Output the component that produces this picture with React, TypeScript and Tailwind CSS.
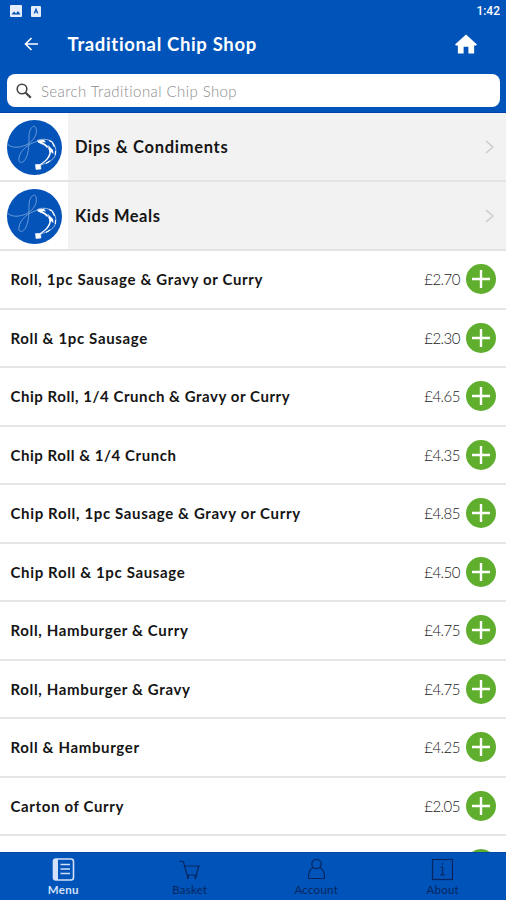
import React from 'react';

const items: [string, string, boolean?][] = [
  ['Roll, 1pc Sausage & Gravy or Curry', '£2.70'],
  ['Roll & 1pc Sausage', '£2.30'],
  ['Chip Roll, 1/4 Crunch & Gravy or Curry', '£4.65', true],
  ['Chip Roll & 1/4 Crunch', '£4.35', true],
  ['Chip Roll, 1pc Sausage & Gravy or Curry', '£4.85'],
  ['Chip Roll & 1pc Sausage', '£4.50'],
  ['Roll, Hamburger & Curry', '£4.75'],
  ['Roll, Hamburger & Gravy', '£4.75'],
  ['Roll & Hamburger', '£4.25'],
  ['Carton of Curry', '£2.05'],
  ['', ''],
];

function Logo() {
  return (
    <svg className="size-[55px]" viewBox="0 0 55 55" fill="none">
      <circle cx="27.5" cy="27.5" r="27.5" fill="#0453b8" />
      <path
        d="M1 24.5 C6 29 14 27 19 25 C26 22 31 14 29 8 C27 3 22 9 22 16 C22 23 22 32 19 38 C16 44 11 44 12 38 C13 31 20 24 31 21"
        stroke="#7fa9e0"
        strokeWidth="0.8"
      />
      <path
        d="M30.5 20.5 C34 18.5 41 19 45 21.5 C49 26 50 32 47.5 37 C44 42 38 43 33.5 45.5 L34 49 L29 49.5 L28.5 44.5 L33 44.5 C38 42 42 38 43 33 C43 28 38 24 33 23.5 Z"
        stroke="#fff"
        strokeWidth="0.6"
        fill="#0453b8"
      />
      <path d="M30.5 20.5 L37 19.8 L39 22.5 L35 21.8 L41 26 L40 28 C37 24.5 34 23.5 31 22.5 Z" fill="#fff" />
      <path d="M41 25 L46 30 L46.5 34 L44 32 C43.5 37 40 41 35 44 L33.5 45.5 L34 49 L29 49.5 L28.5 44.5 L32.5 44.5 C37 42 41 38 42.5 33 Z" fill="#fff" />
      <path d="M42 20.5 L45 22 L47.5 27 M48.5 31 L48.3 35 M43 41 L39 43.5" stroke="#fff" strokeWidth="1.1" />
    </svg>
  );
}

function Category({ name, wide }: { name: string; wide?: boolean }) {
  return (
    <div className="flex h-[69px] shrink-0 border-b-2 border-[#e4e4e4] bg-[#f2f2f2]">
      <div className="flex w-[68px] items-center bg-white pt-px pl-[7px]">
        <Logo />
      </div>
      <div className="flex flex-1 items-center justify-between pr-[12px] pl-[7px]">
        <span
          className={
            wide
              ? 'text-[16.5px] leading-5 font-bold tracking-[0.7px] text-[#151515]'
              : 'text-[16.5px] leading-5 font-bold tracking-[0.55px] text-[#151515]'
          }
        >
          {name}
        </span>
        <svg className="h-[14px] w-[9px]" viewBox="0 0 9 14" fill="none" stroke="#cacaca" strokeWidth="1.4">
          <path d="M1 1 L8 7 L1 13" />
        </svg>
      </div>
    </div>
  );
}

function Item({ name, price, tight }: { name: string; price: string; tight?: boolean }) {
  return (
    <div className="flex h-[58.5px] shrink-0 items-center border-b-2 border-[#e6e6e6] pr-[10px] pl-[10.5px]">
      <span
        className={
          tight
            ? 'flex-1 text-[15px] leading-5 font-bold tracking-[0.55px] text-[#151515]'
            : 'flex-1 text-[15px] leading-5 font-bold tracking-[0.65px] text-[#151515]'
        }
      >
        {name}
      </span>
      <span className="mr-[6px] text-[15px] leading-5 font-light tracking-[-0.5px] text-[#222]">{price}</span>
      <svg className="size-[30px]" viewBox="0 0 30 30">
        <circle cx="15" cy="15" r="15" fill="#5fae2d" />
        <path d="M15 6 V24 M6 15 H24" stroke="#fff" strokeWidth="2.4" />
      </svg>
    </div>
  );
}

function Tab({ label, active, children }: { label: string; active?: boolean; children: React.ReactNode }) {
  return (
    <div className={active ? 'flex flex-1 flex-col items-center pt-[5px] text-[#d3e0fa]' : 'flex flex-1 flex-col items-center pt-[5px] text-[#07265f]'}>
      <svg className="size-[23px]" viewBox="0 0 23 23" fill="none" stroke="currentColor" strokeWidth="1.2">
        {children}
      </svg>
      <span
        className={
          active
            ? 'mt-px text-[11.5px] leading-[15px] font-bold tracking-[0.25px]'
            : 'mt-px text-[11.5px] leading-[15px] tracking-[0.25px]'
        }
      >
        {label}
      </span>
    </div>
  );
}

export default function App() {
  return (
    <div className="flex h-[900px] w-[506px] flex-col overflow-hidden bg-white font-['Lato',sans-serif]">
      <header className="h-[113px] shrink-0 border-b border-[#003fae] bg-[#0053b8]">
        <div className="flex h-[22px] items-center pr-[6px] pl-[10px]">
          <svg className="mr-[9px] size-[12px]" viewBox="0 0 12 12">
            <rect width="12" height="12" rx="1" fill="#e6eefc" />
            <path d="M1.5 9.5 L4 6.5 L6 8.5 L8 6 L10.5 9.5 Z" fill="#0053b8" />
          </svg>
          <svg className="h-[11px] w-[10px]" viewBox="0 0 10 11">
            <rect width="10" height="11" rx="1" fill="#e6eefc" />
            <path d="M3.2 7.5 L5 3 L6.8 7.5 M3.8 6 H6.2" fill="none" stroke="#0053b8" strokeWidth="1.1" />
          </svg>
          <span className="ml-auto font-['Roboto',sans-serif] text-[12px] leading-4 font-medium text-white">1:42</span>
        </div>
        <div className="flex h-[44px] items-center pr-[29px] pl-[24px] text-white">
          <svg className="h-[14px] w-[14px]" viewBox="0 0 14 14" fill="none" stroke="#fff" strokeWidth="1.6">
            <path d="M14 7 H1.5 M7.5 1 L1.5 7 L7.5 13" />
          </svg>
          <h1 className="ml-[29.5px] text-[18.5px] leading-6 font-bold tracking-[0.65px]">Traditional Chip Shop</h1>
          <svg className="ml-auto h-[20px] w-[22px]" viewBox="0 0 23 20" fill="#fff">
            <path d="M11.5 0 L23 10.5 L22 11.5 H20 V20 H14 V13 H9 V20 H3 V11.5 H1 L0 10.5 Z" />
          </svg>
        </div>
        <div className="mx-[6.5px] mt-[8px] flex h-[33px] items-center rounded-[8px] bg-white pl-[9px]">
          <svg className="size-[16px]" viewBox="0 0 16 16" fill="none" stroke="#444">
            <circle cx="6" cy="6" r="4.8" strokeWidth="1.6" />
            <path d="M9.7 9.7 L14.8 14.8" strokeWidth="2.2" />
          </svg>
          <span className="ml-[9.5px] text-[15px] leading-5 font-light tracking-[0.42px] text-[#8c8c8c]">
            Search Traditional Chip Shop
          </span>
        </div>
      </header>
      <main className="flex min-h-0 flex-1 flex-col overflow-hidden">
        <Category name="Dips & Condiments" wide />
        <Category name="Kids Meals" />
        {items.map(([name, price, tight], i) => (
          <Item key={i} name={name} price={price} tight={tight} />
        ))}
      </main>
      <nav className="flex h-[48px] shrink-0 border-t border-[#0047a6] bg-[#0053b8]">
        <Tab label="Menu" active>
          <rect x="1.5" y="1" width="20" height="21" rx="2.5" strokeWidth="1.6" />
          <path d="M4 1 V22" strokeWidth="4" />
          <path d="M8.5 6.5 H18 M8.5 11 H18 M8.5 15.5 H18" strokeWidth="1.4" />
        </Tab>
        <Tab label="Basket">
          <path d="M1.5 3 L5.5 4 L9 17 H19.5 M6.5 8 H21 L18.5 16" />
          <path d="M10 17 V21 M17.5 17 V21" strokeWidth="1.8" />
        </Tab>
        <Tab label="Account">
          <circle cx="11.5" cy="6" r="4.7" />
          <path d="M8 9.5 C4 12 3.5 15 3.5 20.5 H19.5 C19.5 15 19 12 15 9.5" />
        </Tab>
        <Tab label="About">
          <rect x="1.5" y="1.5" width="20" height="20" />
          <path d="M9.5 9 H11.5 V17 M9 17 H14 M11.5 5 V6.8" />
        </Tab>
      </nav>
    </div>
  );
}
